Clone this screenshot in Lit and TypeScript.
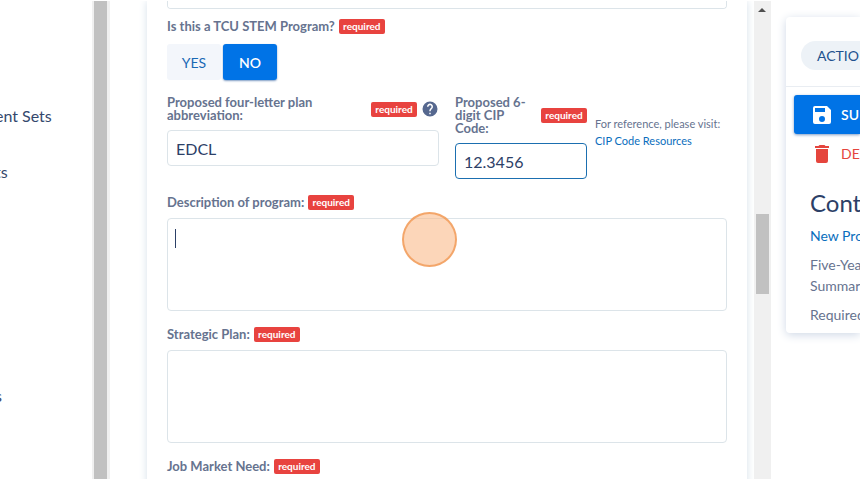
import { LitElement, html, css, svg } from "lit";
import { customElement, property } from "lit/decorators.js";

@customElement("required-badge")
class RequiredBadge extends LitElement {
  static styles = css`
    :host {
      flex: none;
      box-sizing: border-box;
      width: 46px;
      height: 15px;
      border-radius: 2px;
      background: #e8433f;
      color: #fff;
      font: 700 10px/14px Lato, sans-serif;
      text-align: center;
    }
  `;
  render() {
    return html`required`;
  }
}

@customElement("scroll-rail")
class ScrollRail extends LitElement {
  @property({ type: Boolean }) full = false;

  static styles = css`
    :host {
      display: block;
      box-sizing: border-box;
      background: #f0f0f0;
      padding: 0 2px;
      overflow: hidden;
    }
    .arrow {
      display: block;
      width: 8px;
      height: 4px;
      margin: 7px auto 0 2px;
    }
    .thumb {
      height: 80px;
      margin-top: 202px;
      background: #c1c1c1;
    }
    .tall {
      width: 13px;
      height: 100%;
      background: #c1c1c1;
    }
  `;
  render() {
    return this.full
      ? html`<div class="tall"></div>`
      : html`<svg class="arrow" viewBox="0 0 8 4"><path d="M0 4 4 0l4 4z" fill="#505050" /></svg>
          <div class="thumb"></div>`;
  }
}

const saveIcon = svg`<path fill="currentColor" fill-rule="evenodd"
  d="M17 3H5a2 2 0 0 0-2 2v14a2 2 0 0 0 2 2h14a2 2 0 0 0 2-2V7zM12 19a3 3 0 1 1 0-6 3 3 0 0 1 0 6zM15 9H5V5h10z" />`;
const trashIcon = svg`<path fill="currentColor"
  d="M6 19a2 2 0 0 0 2 2h8a2 2 0 0 0 2-2V7H6zM19 4h-3.500l-1-1h-5l-1 1H5v2h14z" />`;
const helpIcon = svg`<path fill="currentColor"
  d="M12 2a10 10 0 1 0 0 20 10 10 0 0 0 0-20zm1 17h-2v-2h2zm2.070-7.750-.9.920C13.450 12.900 13 13.500 13 15h-2v-.5c0-1.100.450-2.100 1.170-2.830l1.240-1.260A2 2 0 1 0 10 9H8a4 4 0 1 1 7.070 2.250z" />`;

@customElement("app-root")
class AppRoot extends LitElement {
  static styles = css`
    :host {
      display: block;
      font-family: Lato, sans-serif;
      color: #66738f;
    }
    * {
      box-sizing: border-box;
    }
    .page {
      display: grid;
      grid-template-columns: 92px 18px minmax(0, 1fr) 17px 89px;
      height: 100vh;
      padding-top: 1px;
      overflow: hidden;
      background: #fff;
    }
    a {
      color: #0a6ebd;
      text-decoration: none;
    }
    .nav {
      display: flex;
      flex-direction: column;
      padding-top: 103px;
      margin-left: -5px;
      overflow: hidden;
    }
    .nav a {
      color: #34486d;
      font-size: 16px;
      line-height: 24px;
      margin-bottom: 32px;
    }
    .nav .last {
      margin-top: 168px;
    }
    .main {
      overflow: hidden;
      padding: 0 7px 0 37px;
    }
    .form {
      display: flex;
      flex-direction: column;
      padding: 0 20px;
      min-height: 100%;
      box-shadow: 0 0 8px #d5e0ea;
    }
    .field {
      width: 100%;
      border: 1px solid #dce4e9;
      border-radius: 4px;
      background: #fff;
      color: #2c4067;
      font: 400 16px/20px Lato, sans-serif;
      padding: 0 8px;
      outline: none;
      display: block;
      resize: none;
    }
    input.field {
      height: 36px;
    }
    input.active {
      border-color: #1b6fb0;
    }
    textarea.field {
      height: 93px;
      padding-top: 8px;
      margin-bottom: 16px;
    }
    textarea.cut {
      height: 8px;
      min-height: 0;
      padding: 0;
      border-top: 0;
      border-radius: 0 0 4px 4px;
      margin-bottom: 10px;
    }
    .editing {
      position: relative;
    }
    .caret {
      position: absolute;
      left: 8px;
      top: 11px;
      width: 1px;
      height: 19px;
      background: #2c4067;
    }
    #description {
      caret-color: transparent;
    }
    .title {
      display: flex;
      align-items: center;
      gap: 4px;
      min-height: 15px;
      font-size: 13px;
      font-weight: 700;
      line-height: 13px;
      margin-bottom: 8px;
    }
    .spread {
      justify-content: space-between;
    }
    .spread label {
      flex: 1;
    }
    .help {
      width: 18px;
      height: 18px;
      color: #56688f;
      flex: none;
    }
    .toggle {
      display: flex;
      gap: 2px;
      margin: 2px 0 16px;
    }
    .toggle button {
      width: 54px;
      height: 36px;
      border: 0;
      border-radius: 3px;
      background: #f3f6fb;
      color: #1a69b5;
      font: 400 14px/20px Lato, sans-serif;
      padding: 2px 0 0;
    }
    .toggle .on {
      background: #0073e6;
      color: #fff;
      font-weight: 600;
      box-shadow: 0 1px 2px #7f9cc4;
    }
    .row {
      display: grid;
      grid-template-columns: minmax(0, 280fr) minmax(0, 132fr) 132px;
      column-gap: 8px;
      align-items: start;
      margin-bottom: 16px;
    }
    .row .plan {
      margin-right: 8px;
    }
    .note {
      padding-top: 19px;
      font-size: 11px;
      line-height: 17px;
      white-space: nowrap;
    }
    .note a {
      display: block;
    }
    .aside {
      overflow: hidden;
      padding: 16px 0 16px 15px;
    }
    .card {
      border-radius: 4px 0 0 4px;
      box-shadow: 0 2px 10px #cfd8e6;
      font-size: 14px;
      line-height: 21px;
      white-space: nowrap;
      height: 316px;
    }
    .head {
      height: 70px;
      padding: 24px 0 0 15px;
      border-bottom: 1px solid #e9edf2;
    }
    .pill {
      display: block;
      width: 100%;
      height: 29px;
      border: 0;
      border-radius: 15px 0 0 15px;
      background: #edf2f7;
      color: #21518e;
      font: 400 14px/28px Lato, sans-serif;
      text-align: left;
      padding: 0 0 0 16px;
    }
    .actions {
      padding: 8px 0 0 8px;
    }
    .action {
      display: flex;
      align-items: center;
      gap: 7px;
      width: 100%;
      height: 39px;
      border: 0;
      border-radius: 3px 0 0 3px;
      padding: 0 0 0 16px;
      background: none;
      color: #e5453d;
      font: 400 14px/20px Lato, sans-serif;
    }
    .action svg {
      width: 24px;
      height: 24px;
      flex: none;
    }
    .primary {
      background: #0073e6;
      color: #fff;
      font-weight: 600;
      box-shadow: 0 1px 3px #7f9cc4;
    }
    .info {
      padding: 16px 0 0 24px;
    }
    h2 {
      margin: 0 0 8px;
      color: #2c4067;
      font-size: 24px;
      font-weight: 400;
      line-height: 28px;
    }
    p {
      margin: 0 0 8px;
    }
    .pointer {
      position: absolute;
      left: calc(50% - 28px);
      top: 212px;
      width: 55px;
      height: 55px;
      border: 2px solid rgba(240, 150, 80, 0.75);
      border-radius: 50%;
      background: rgba(250, 185, 135, 0.58);
      pointer-events: none;
    }
  `;

  firstUpdated() {
    this.renderRoot.querySelector<HTMLTextAreaElement>("#description")?.focus();
  }

  render() {
    return html`
      <div class="page">
        <nav class="nav">
          <a href="#sets">ent Sets</a>
          <a href="#second">ts</a>
          <a class="last" href="#third">s</a>
        </nav>
        <scroll-rail full></scroll-rail>
        <main class="main">
          <form class="form">
            <textarea class="field cut" aria-label="Previous answer"></textarea>
            <div class="title">
              <span id="stem">Is this a TCU STEM Program?</span>
              <required-badge></required-badge>
            </div>
            <div class="toggle" role="group" aria-labelledby="stem">
              <button type="button">YES</button>
              <button type="button" class="on" aria-pressed="true">NO</button>
            </div>
            <div class="row">
              <div class="plan">
                <div class="title spread">
                  <label for="plan">Proposed four-letter plan abbreviation:</label>
                  <required-badge></required-badge>
                  <svg class="help" viewBox="0 0 24 24">${helpIcon}</svg>
                </div>
                <input class="field" id="plan" .value=${"EDCL"} />
              </div>
              <div>
                <div class="title spread">
                  <label for="cip">Proposed 6-digit CIP Code:</label>
                  <required-badge></required-badge>
                </div>
                <input class="field active" id="cip" .value=${"12.3456"} />
              </div>
              <div class="note">
                For reference, please visit:
                <a href="#cip-codes">CIP Code Resources</a>
              </div>
            </div>
            <div class="title">
              <label for="description">Description of program:</label>
              <required-badge></required-badge>
            </div>
            <div class="editing">
              <textarea class="field" id="description"></textarea>
              <span class="caret"></span>
            </div>
            <div class="title">
              <label for="strategic">Strategic Plan:</label>
              <required-badge></required-badge>
            </div>
            <textarea class="field" id="strategic"></textarea>
            <div class="title">
              <label for="market">Job Market Need:</label>
              <required-badge></required-badge>
            </div>
            <textarea class="field" id="market"></textarea>
          </form>
        </main>
        <scroll-rail></scroll-rail>
        <aside class="aside">
          <div class="card">
            <div class="head"><button class="pill">ACTIO</button></div>
            <div class="actions">
              <button class="action primary">
                <svg viewBox="0 0 24 24">${saveIcon}</svg>SU
              </button>
              <button class="action">
                <svg viewBox="0 0 24 24">${trashIcon}</svg>DE
              </button>
            </div>
            <div class="info">
              <h2>Cont</h2>
              <p><a href="#new">New Pro</a></p>
              <p>Five-Yea<br />Summar</p>
              <p>Required</p>
            </div>
          </div>
        </aside>
      </div>
      <div class="pointer"></div>
    `;
  }
}
